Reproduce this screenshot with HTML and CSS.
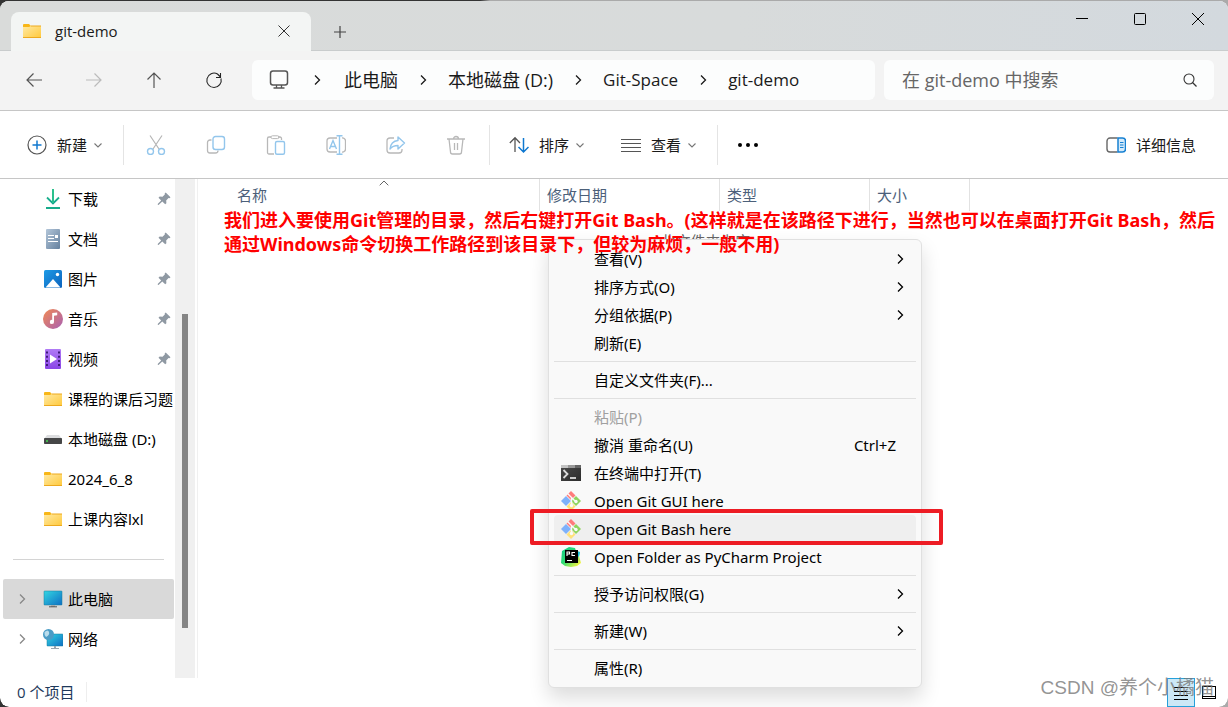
FILE: index.html
```html
<!DOCTYPE html>
<html lang="zh-CN">
<head>
<meta charset="utf-8">
<title>git-demo</title>
<link rel="stylesheet" href="styles.css">
</head>
<body>
<svg class="defs" aria-hidden="true">
  <defs>
    <linearGradient id="gFolder" x1="0" y1="0" x2="1" y2="1"><stop offset="0" stop-color="#ffe9a3"/><stop offset="1" stop-color="#ffc93c"/></linearGradient>
    <linearGradient id="gDown" x1="0" y1="0" x2="0" y2="1"><stop offset="0" stop-color="#2fc98c"/><stop offset="1" stop-color="#12a38f"/></linearGradient>
    <linearGradient id="gDoc" x1="0" y1="0" x2="1" y2="1"><stop offset="0" stop-color="#b3c6d9"/><stop offset="1" stop-color="#64809e"/></linearGradient>
    <linearGradient id="gPic" x1="0" y1="0" x2="1" y2="1"><stop offset="0" stop-color="#1e9be6"/><stop offset="1" stop-color="#0c62bd"/></linearGradient>
    <linearGradient id="gMusic" x1="0" y1="0" x2="1" y2="1"><stop offset="0" stop-color="#f28a52"/><stop offset="1" stop-color="#a860b4"/></linearGradient>
    <linearGradient id="gVideo" x1="0" y1="0" x2="0" y2="1"><stop offset="0" stop-color="#b07bf5"/><stop offset="1" stop-color="#8a45e6"/></linearGradient>
    <linearGradient id="gScreen" x1="0" y1="0" x2="1" y2="1"><stop offset="0" stop-color="#33d6e2"/><stop offset="1" stop-color="#0f6fc4"/></linearGradient>
    <linearGradient id="gPy" x1="0" y1="0" x2="1" y2="1"><stop offset="0" stop-color="#12c98a"/><stop offset=".45" stop-color="#2fdc74"/><stop offset=".9" stop-color="#f6f442"/></linearGradient>
    <linearGradient id="gTerm" x1="0" y1="0" x2="1" y2="1"><stop offset="0" stop-color="#4a4a4a"/><stop offset="1" stop-color="#2c2c2c"/></linearGradient>
    <symbol id="folder" viewBox="0 0 20 20"><path d="M1 4a1 1 0 0 1 1-1h5l2 2v3H1z" fill="#f8b617"/><path d="M1 6h6l2-1h10v12H1z" fill="url(#gFolder)"/><path d="M9 5h10M1 16.500h18" stroke="#eda91f" fill="none"/></symbol>
    <symbol id="chev" viewBox="0 0 12 12"><path d="M4 1.500 8.500 6 4 10.500" fill="none" stroke="currentColor" stroke-width="1.300"/></symbol>
    <symbol id="down" viewBox="0 0 10 10"><path d="M1.500 3.500 5 7l3.500-3.500" fill="none" stroke="#777" stroke-width="1.100"/></symbol>
    <symbol id="pin" viewBox="0 0 14 14"><path d="M8.700.5 13.500 5.300l-1 1-1-.2-2.300 2.400.2 2.700-1.200 1.100-2.900-2.900L1.500 13l-.8-.3.2-.9 3.300-3.400L1.500 5.700l1.200-1.200 2.800.2 2.300-2.300-.1-1z" fill="#8f99a3"/></symbol>
    <symbol id="git" viewBox="0 0 20 20"><path d="M10 0 14.500 4.500 10 9 5.500 4.500z" fill="#ff7b7b"/><path d="M5 5 10 10 5 15 0 10z" fill="#7eb1fb"/><path d="M15 5 20 10 15 15 10 10z" fill="#8fd55f"/><path d="M10 11 14.500 15.500 10 20 5.500 15.500z" fill="#ffe27b"/><path d="M6.500 2.500l4 4V14M10.500 6.500l4 4" fill="none" stroke="#fafafa" stroke-width="1.400"/><circle cx="10.500" cy="14.500" r="1.700" fill="#fafafa"/><circle cx="15" cy="10.500" r="1.700" fill="#fafafa"/></symbol>
  </defs>
</svg>
<div class="window">
  <header class="titlebar">
    <div class="tab">
      <svg class="ic20"><use href="#folder"/></svg>
      <span class="tab-name">git-demo</span>
      <button class="bare" aria-label="关闭标签页"><svg class="ic14" viewBox="0 0 14 14"><path d="M1.500 1.500l11 11M12.500 1.500l-11 11" stroke="#333"/></svg></button>
    </div>
    <button class="bare add" aria-label="新标签页"><svg class="ic14" viewBox="0 0 14 14"><path d="M7 1v12M1 7h12" stroke="#444" stroke-width="1.200"/></svg></button>
    <div class="controls">
      <button class="bare" aria-label="最小化"><svg class="ic14" viewBox="0 0 14 14"><path d="M1 6.500h12" stroke="#000"/></svg></button>
      <button class="bare" aria-label="最大化"><svg class="ic14" viewBox="0 0 14 14"><rect x="1.500" y="1.500" width="11" height="11" rx="1" fill="none" stroke="#000"/></svg></button>
      <button class="bare" aria-label="关闭"><svg class="ic14" viewBox="0 0 14 14"><path d="M1 1l12 12M13 1L1 13" stroke="#000"/></svg></button>
    </div>
  </header>

  <nav class="navbar">
    <div class="history">
      <button class="bare" aria-label="后退"><svg class="ic20" viewBox="0 0 20 20"><path d="M18 10H3M9.500 3.500 3 10l6.500 6.500" fill="none" stroke="#555" stroke-width="1.200"/></svg></button>
      <button class="bare" aria-label="前进"><svg class="ic20" viewBox="0 0 20 20"><path d="M2 10h15M10.500 3.500 17 10l-6.500 6.500" fill="none" stroke="#bbb" stroke-width="1.200"/></svg></button>
      <button class="bare" aria-label="上移"><svg class="ic20" viewBox="0 0 20 20"><path d="M10 18V3M3.500 9.500 10 3l6.500 6.500" fill="none" stroke="#555" stroke-width="1.200"/></svg></button>
      <button class="bare" aria-label="刷新"><svg class="ic20" viewBox="0 0 20 20"><path d="M17 8.500A7.200 7.200 0 1 1 13.500 4L16.500 7M16.500 3v4.500H12" fill="none" stroke="#222" stroke-width="1.100"/></svg></button>
    </div>
    <div class="address">
      <svg class="ic20" viewBox="0 0 20 20"><rect x="1.500" y="1" width="17" height="14" rx="2.500" fill="none" stroke="#555" stroke-width="1.500"/><path d="M7.500 15v3M12.500 15v3M4.500 18h11" stroke="#555" stroke-width="1.300"/></svg>
      <svg class="sep"><use href="#chev"/></svg><a href="#">此电脑</a>
      <svg class="sep"><use href="#chev"/></svg><a href="#">本地磁盘 (D:)</a>
      <svg class="sep"><use href="#chev"/></svg><a class="latin" href="#">Git-Space</a>
      <svg class="sep"><use href="#chev"/></svg><a class="latin" href="#">git-demo</a>
    </div>
    <label class="search">
      <input type="text" placeholder="在 git-demo 中搜索" aria-label="搜索">
      <svg class="ic16" viewBox="0 0 16 16"><circle cx="7" cy="7" r="5" fill="none" stroke="#333" stroke-width="1.100"/><path d="M10.500 10.500l4 4" stroke="#333" stroke-width="1.200"/></svg>
    </label>
  </nav>

  <div class="toolbar">
    <button class="cmd"><svg class="ic20" viewBox="0 0 20 20"><circle cx="10" cy="10" r="9" fill="none" stroke="#555" stroke-width="1.200"/><path d="M10 5.500v9M5.500 10h9" stroke="#0f78d0" stroke-width="1.500"/></svg>新建<svg class="ic10"><use href="#down"/></svg></button>
    <span class="rule"></span>
    <div class="icons">
      <button class="bare" aria-label="剪切"><svg class="ic20" viewBox="0 0 20 20" fill="none"><path d="M4 0.500 13 14M16 0.500 7 14" stroke="#b5b5b5" stroke-width="1.200"/><circle cx="4.500" cy="16.500" r="3" stroke="#93c6ec" stroke-width="1.400"/><circle cx="15.500" cy="16.500" r="3" stroke="#93c6ec" stroke-width="1.400"/></svg></button>
      <button class="bare" aria-label="复制"><svg class="ic20" viewBox="0 0 20 20" fill="none"><path d="M5.500 5H4a2.500 2.500 0 0 0-2.500 2.500v8A2.500 2.500 0 0 0 4 18h5.500a2.500 2.500 0 0 0 2.500-2.500" stroke="#b8b8b8" stroke-width="1.300"/><rect x="7" y="1.500" width="11.500" height="13" rx="2.500" stroke="#93c6ec" stroke-width="1.400"/></svg></button>
      <button class="bare" aria-label="粘贴"><svg class="ic20" viewBox="0 0 20 20" fill="none"><path d="M8 19H3a1.500 1.500 0 0 1-1.500-1.500v-14A1.500 1.500 0 0 1 3 2h2M12 2h2a1.500 1.500 0 0 1 1.500 1.500V5" stroke="#b8b8b8" stroke-width="1.300"/><rect x="5" y=".8" width="8" height="2.800" rx="1.400" stroke="#b8b8b8"/><rect x="9.500" y="6.500" width="9" height="12.800" rx="1.500" stroke="#93c6ec" stroke-width="1.400"/></svg></button>
      <button class="bare" aria-label="重命名"><svg class="ic20" viewBox="0 0 20 20" fill="none"><path d="M11 3H4a3 3 0 0 0-3 3v8a3 3 0 0 0 3 3h7M16 3a3 3 0 0 1 3.500 3v8A3 3 0 0 1 16 17" stroke="#b8b8b8" stroke-width="1.300"/><path d="M3.500 14 7 5.500 10.500 14M4.700 11.500h4.600M13.500 1v18M10.500.8h6M10.500 19.200h6" stroke="#93c6ec" stroke-width="1.400"/></svg></button>
      <button class="bare" aria-label="共享"><svg class="ic20" viewBox="0 0 20 20" fill="none"><path d="M8 3H4a3 3 0 0 0-3 3v9a3 3 0 0 0 3 3h9a3 3 0 0 0 3-3v-1" stroke="#b8b8b8" stroke-width="1.300"/><path d="M12 2l6.500 6L12 14v-3.500c-4 0-6 1-8 3.500.5-5 3-8 8-8.500z" stroke="#93c6ec" stroke-width="1.400" stroke-linejoin="round"/></svg></button>
      <button class="bare" aria-label="删除"><svg class="ic20" viewBox="0 0 20 20" fill="none"><path d="M1 4h18M3 4l1.500 13a2 2 0 0 0 2 2h7a2 2 0 0 0 2-2L17 4M7.500 4a2.500 2.500 0 0 1 5 0M8.500 8v7M11.500 8v7" stroke="#b8b8b8" stroke-width="1.300"/></svg></button>
    </div>
    <span class="rule"></span>
    <button class="cmd"><svg class="ic20" viewBox="0 0 20 20" fill="none"><path d="M6 17V3M.8 8 6 2.800 11 8" stroke="#555" stroke-width="1.300"/><path d="M14.500 3v14M9.500 12l5 5 5-5" stroke="#0f78d0" stroke-width="1.500"/></svg>排序<svg class="ic10"><use href="#down"/></svg></button>
    <button class="cmd view"><svg class="ic20" viewBox="0 0 20 20"><path d="M0 4.500h20M0 8.500h20M0 12.500h20M0 16.500h20" stroke="#555"/></svg>查看<svg class="ic10"><use href="#down"/></svg></button>
    <span class="rule"></span>
    <button class="bare more" aria-label="更多"><svg class="ic22" viewBox="0 0 22 22"><circle cx="3" cy="11" r="2"/><circle cx="11" cy="11" r="2"/><circle cx="19" cy="11" r="2"/></svg></button>
    <button class="cmd details"><svg class="ic20" viewBox="0 0 20 20" fill="none"><path d="M11.500 3H4a3 3 0 0 0-3 3v8a3 3 0 0 0 3 3h7.500" stroke="#666" stroke-width="1.400"/><path d="M12 3h4.500a3 3 0 0 1 3 3v8a3 3 0 0 1-3 3H12z" fill="#d4eafa" stroke="#1680d2" stroke-width="1.500"/><path d="M14 7.500h3.500M14 10h3.500M14 12.500h3.500" stroke="#1680d2" stroke-width="1.200"/></svg>详细信息</button>
  </div>

  <main class="main">
    <aside class="sidebar">
      <ul class="tree">
        <li><svg class="ic20" viewBox="0 0 20 20"><path d="M10 0v14M4 8.500l6 6 6-6" fill="none" stroke="url(#gDown)" stroke-width="1.800"/><path d="M9.100 0h1.800v14H9.100z" fill="#2bc08c"/><path d="M3 18h14v2H3z" fill="#17ab8b"/></svg><span>下载</span><svg class="pin"><use href="#pin"/></svg></li>
        <li><svg class="ic20" viewBox="0 0 20 20"><rect x="3" width="14" height="20" rx="1" fill="url(#gDoc)"/><path d="M5 6.500h6M5 9.500h6M5 12.500h10" stroke="#fff" stroke-width="1.200"/><path d="M12 6h3v3h-3z" fill="#fff"/></svg><span>文档</span><svg class="pin"><use href="#pin"/></svg></li>
        <li><svg class="ic20" viewBox="0 0 20 20"><rect x="1" y="1" width="18" height="18" rx="1.500" fill="url(#gPic)"/><path d="M2.500 18.500 10 10l7.500 8.500z" fill="#fff"/><circle cx="14.500" cy="5.500" r="1.700" fill="#fff"/></svg><span>图片</span><svg class="pin"><use href="#pin"/></svg></li>
        <li><svg class="ic20" viewBox="0 0 20 20"><circle cx="10" cy="10" r="10" fill="url(#gMusic)"/><path d="M9.200 4l5-.5v2.700l-3.200.5v6a2.100 2.100 0 1 1-1.800-1.800z" fill="#fff"/></svg><span>音乐</span><svg class="pin"><use href="#pin"/></svg></li>
        <li><svg class="ic20" viewBox="0 0 20 20"><rect x="2" width="16" height="20" rx="1" fill="url(#gVideo)"/><path d="M4 2.500v16M16 2.500v16" stroke="#3f1c78" stroke-width="2" stroke-dasharray="2 2.200"/><path d="M7 5.500 14 10l-7 4.500z" fill="#fff"/></svg><span>视频</span><svg class="pin"><use href="#pin"/></svg></li>
        <li><svg class="ic20"><use href="#folder"/></svg><span>课程的课后习题</span></li>
        <li><svg class="ic20" viewBox="0 0 20 20"><path d="M4 6h12l3 4H1z" fill="#dcdddf"/><rect x="1" y="9" width="18" height="6" rx=".8" fill="#454647"/><circle cx="4" cy="12" r="1" fill="#43d94f"/></svg><span>本地磁盘 (D:)</span></li>
        <li><svg class="ic20"><use href="#folder"/></svg><span>2024_6_8</span></li>
        <li><svg class="ic20"><use href="#folder"/></svg><span>上课内容lxl</span></li>
      </ul>
      <hr class="side-rule">
      <ul class="tree">
        <li class="selected"><svg class="twist"><use href="#chev"/></svg><svg class="ic20" viewBox="0 0 20 20"><rect x="1" y="2" width="18" height="14" rx=".6" fill="url(#gScreen)" stroke="#1b7d9e" stroke-width=".5"/><path d="M8 16h4v2H8z" fill="#aaa"/><path d="M6 17.800h8" stroke="#555"/></svg><span>此电脑</span></li>
        <li><svg class="twist"><use href="#chev"/></svg><svg class="ic20" viewBox="0 0 20 20"><rect x="4" y="5" width="16" height="12" rx=".6" fill="url(#gScreen)" stroke="#1b7d9e" stroke-width=".5"/><path d="M11 17h2v2h3v1H8v-1h3z" fill="#9aa5b0"/><circle cx="5.500" cy="5.500" r="5.500" fill="#4b9cc6"/><path d="M1.500 3Q5 0 6 3T3 8Q1 6 1.500 3z" fill="#b9dcec"/></svg><span>网络</span></li>
      </ul>
    </aside>
    <div class="scroll"><div class="thumb"></div></div>
    <section class="content">
      <div class="columns">
        <div class="col name">名称<svg class="sort" viewBox="0 0 10 6"><path d="M.7 5.300 5 1l4.300 4.300" fill="none" stroke="#666"/></svg></div>
        <div class="col date">修改日期</div>
        <div class="col type">类型</div>
        <div class="col size">大小</div>
      </div>
      <p class="empty">此文件夹为空。</p>
    </section>
  </main>

  <footer class="status">
    <span class="count">0 个项目</span>
    <div class="modes">
      <button class="mode on" aria-label="详细列表"><svg class="ic16" viewBox="0 0 16 16"><path d="M1 2.500h14M1 6.500h14M1 10.500h14M1 14.500h14" stroke="#000"/></svg></button>
      <button class="mode" aria-label="大图标"><svg class="ic16" viewBox="0 0 16 16"><rect x="1.500" y="1.500" width="13" height="12" fill="none" stroke="#000"/><path d="M1 11.500h14" stroke="#000"/></svg></button>
    </div>
  </footer>

  <div class="menu" role="menu">
    <button class="item" role="menuitem"><i></i><span>查看(V)</span><svg class="arrow"><use href="#chev"/></svg></button>
    <button class="item" role="menuitem"><i></i><span>排序方式(O)</span><svg class="arrow"><use href="#chev"/></svg></button>
    <button class="item" role="menuitem"><i></i><span>分组依据(P)</span><svg class="arrow"><use href="#chev"/></svg></button>
    <button class="item" role="menuitem"><i></i><span>刷新(E)</span></button>
    <hr>
    <button class="item" role="menuitem"><i></i><span>自定义文件夹(F)...</span></button>
    <hr>
    <button class="item" role="menuitem" disabled><i></i><span>粘贴(P)</span></button>
    <button class="item" role="menuitem"><i></i><span>撤消 重命名(U)</span><kbd>Ctrl+Z</kbd></button>
    <button class="item" role="menuitem"><svg class="ic20" viewBox="0 0 20 20"><path d="M0 2h20v16H0z" fill="url(#gTerm)"/><path d="M0 2h7v3H0z" fill="#c4c4c4"/><path d="M7 2h7v3H7z" fill="#999"/><path d="M14 2h6v3h-6z" fill="#666"/><path d="M2.500 7l4 4-4 4" fill="none" stroke="#ddd" stroke-width="1.800"/><path d="M9 15h6" stroke="#fff" stroke-width="1.500"/></svg><span>在终端中打开(T)</span></button>
    <button class="item" role="menuitem"><svg class="ic20"><use href="#git"/></svg><span>Open Git GUI here</span></button>
    <button class="item hover" role="menuitem"><svg class="ic20"><use href="#git"/></svg><span>Open Git Bash here</span></button>
    <button class="item" role="menuitem"><svg class="ic20" viewBox="0 0 20 20"><path d="M1 4 8 0l6 1 1 3 4 1-1 4 2 7-4 3-6 1-6-1-4-3z" fill="url(#gPy)"/><path d="M15 4l4 1-1 5-2-2z" fill="#18c5e8"/><path d="M4 3h13v13H4z" fill="#000"/><path d="M6 9V5h2.500v2H6M14 5.500h-3v3h3" fill="none" stroke="#fff" stroke-width="1.100"/><path d="M6 13.500h5" stroke="#fff"/></svg><span>Open Folder as PyCharm Project</span></button>
    <hr>
    <button class="item" role="menuitem"><i></i><span>授予访问权限(G)</span><svg class="arrow"><use href="#chev"/></svg></button>
    <hr>
    <button class="item" role="menuitem"><i></i><span>新建(W)</span><svg class="arrow"><use href="#chev"/></svg></button>
    <hr>
    <button class="item" role="menuitem"><i></i><span>属性(R)</span></button>
  </div>
  <div class="highlight"></div>
  <p class="note">我们进入要使用Git管理的目录，然后右键打开Git Bash。(这样就是在该路径下进行，当然也可以在桌面打开Git Bash，然后<br>通过Windows命令切换工作路径到该目录下，但较为麻烦，一般不用)</p>
  <div class="watermark">CSDN @养个小橘猫</div>
</div>
</body>
</html>
```
FILE: styles.css
```css
* { box-sizing: border-box; }
body {
  margin: 0;
  background: linear-gradient(90deg, #333 480px, #aaa 490px);
  font: 15px/20px "Open Sans", "Noto Sans CJK SC", sans-serif;
  color: #1a1a1a;
}
.defs { position: absolute; width: 0; height: 0; }
button, input { font: inherit; color: inherit; }
button { border: 0; padding: 0; background: none; }
svg { display: block; flex: none; }
p, ul { margin: 0; padding: 0; list-style: none; }
a { color: inherit; text-decoration: none; }
.ic10 { width: 10px; height: 10px; }
.ic14 { width: 14px; height: 14px; }
.ic16 { width: 16px; height: 16px; }
.ic20 { width: 20px; height: 20px; }
.ic22 { width: 22px; height: 22px; }

.window {
  position: relative;
  display: flex;
  flex-direction: column;
  min-height: 100vh;
  border-top: 1px solid transparent;
  background: #fff padding-box;
  border-radius: 9px;
  overflow: hidden;
}
.bare { display: grid; place-items: center; }

.titlebar {
  display: flex;
  height: 50px;
  padding: 0 1px 0 11px;
  background: linear-gradient(90deg, #d9dbda 0%, #d8dbdb 60%, #d3d9de 100%);
  box-shadow: inset 0 -1px #c9cccd;
}
.tab {
  display: flex;
  align-items: center;
  width: 300px;
  margin-top: 11px;
  padding: 0 20px 2px 11px;
  background: #f3f5f4;
  border-radius: 8px 8px 0 0;
}
.tab-name { flex: 1; margin-left: 13px; }
.add { width: 58px; margin-top: 11px; }
.controls { display: flex; height: 36px; margin-left: auto; }
.controls .bare { width: 58px; }

.navbar {
  display: flex;
  align-items: center;
  height: 60px;
  padding: 0 14px 2px 0;
  background: #f3f3f3;
  border-bottom: 1px solid #c6c6c6;
  font-size: 18px;
}
.history { display: flex; padding-left: 4px; margin-right: 8px; }
.history .bare { width: 60px; height: 40px; }
.address, .search {
  display: flex;
  align-items: center;
  height: 40px;
  background: #fcfdfd;
  border-radius: 6px;
}
.address { flex: 1; padding-left: 17px; white-space: nowrap; }
.latin { font-size: 17px; }
.sep { width: 12px; height: 12px; margin: 0 19px; }
.address .ic20 + .sep { margin: 0 21px 0 22px; }
.search { width: 330px; margin-left: 9px; padding: 0 16px 0 18px; }
.search input { flex: 1; min-width: 0; height: 30px; padding: 0; border: 0; outline: 0; background: none; line-height: 30px; }
.search input::placeholder { color: #666; opacity: 1; line-height: 30px; }

.toolbar {
  display: flex;
  align-items: center;
  height: 68px;
  padding: 0 32px 0 27px;
  border-bottom: 1px solid #c6c6c6;
}
.cmd { display: flex; align-items: center; gap: 10px; }
.cmd .ic10 { margin-left: -4px; }
.rule { width: 1px; height: 40px; margin: 0 19px 0 20px; background: #e4e4e4; }
.icons { display: flex; margin: 0 -17px; }
.icons .bare { width: 60px; height: 40px; }
.view { margin-left: 36px; }
.details { margin-left: auto; }

.main { display: flex; flex: 1; }
.sidebar { width: 175px; padding-bottom: 19px; }
.tree { font-family: "Noto Sans", "Noto Sans CJK SC", sans-serif; color: #000; }
.tree li {
  display: flex;
  align-items: center;
  height: 40px;
  margin: 0 1px 0 3px;
  padding-left: 40px;
  border-radius: 2px;
  white-space: nowrap;
}
.tree span { margin-left: 5px; }
.tree .pin { width: 14px; height: 14px; margin: 0 3px 0 auto; }
.tree .twist { width: 12px; height: 12px; margin: 0 15px 0 -27px; color: #888; }
.tree .selected { background: #d9d9d9; }
.side-rule { margin: 20px 11px 19px 13px; border: 0; border-top: 1px solid #d4d4d4; }
.scroll { width: 20px; padding: 135px 7px 50px; background: #f0f0f0; }
.thumb { height: 100%; background: #858585; }
.content { flex: 1; margin-left: 2px; border-left: 1px solid #f0f0f0; }
.columns { display: flex; height: 32px; color: #4c607a; }
.col { position: relative; padding: 6px 7px; border-right: 1px solid #e2e2e2; }
.name { width: 342px; padding-left: 39px; }
.date { width: 180px; }
.type { width: 150px; }
.size { width: 100px; }
.sort { position: absolute; top: 1px; left: 181px; width: 10px; height: 6px; }
.empty { margin-top: 20px; text-align: center; color: #666; }

.status { display: flex; height: 29px; color: #1e395b; }
.count { height: 20px; margin-top: 4px; padding: 0 12px 0 17px; border-right: 1px solid #eee; }
.modes { display: flex; margin-left: auto; padding-right: 5px; }
.mode { display: grid; place-items: center; width: 28px; }
.on { background: #cce8f6; border: 1px solid #26a0da; }

.menu {
  position: absolute;
  top: 238px;
  left: 548px;
  width: 374px;
  padding: 5px;
  background: #f9f9f9;
  border: 1px solid #e0e0e0;
  border-radius: 6px;
  box-shadow: 0 10px 20px rgba(0, 0, 0, .14);
  font-family: "Noto Sans", "Noto Sans CJK SC", sans-serif;
  color: #000;
}
.item {
  display: flex;
  align-items: center;
  width: 100%;
  height: 28px;
  padding: 0 10px 0 7px;
  border-radius: 4px;
  text-align: left;
}
.item i { width: 20px; }
.item span { flex: 1; margin-left: 13px; }
.item:disabled { color: #a0a0a0; }
.item kbd { margin-right: 10px; font: inherit; }
.hover { background: #efefef; }
.arrow { width: 12px; height: 12px; }
.menu hr { margin: 4px 0; border: 0; border-top: 1px solid #e0e0e0; }

.highlight {
  position: absolute;
  top: 508px;
  left: 530px;
  width: 413px;
  height: 36px;
  border: 4px solid #ed1c24;
  border-radius: 2px;
}
.note {
  position: absolute;
  top: 207px;
  left: 224px;
  font: 700 18px/24px "Noto Sans", "Noto Sans CJK SC", sans-serif;
  color: #f00;
  white-space: nowrap;
}
.watermark {
  position: absolute;
  right: 14px;
  bottom: 7px;
  font: 19px/24px "Liberation Sans", "Noto Sans CJK SC", sans-serif;
  color: rgba(120, 120, 120, .8);
}
```
